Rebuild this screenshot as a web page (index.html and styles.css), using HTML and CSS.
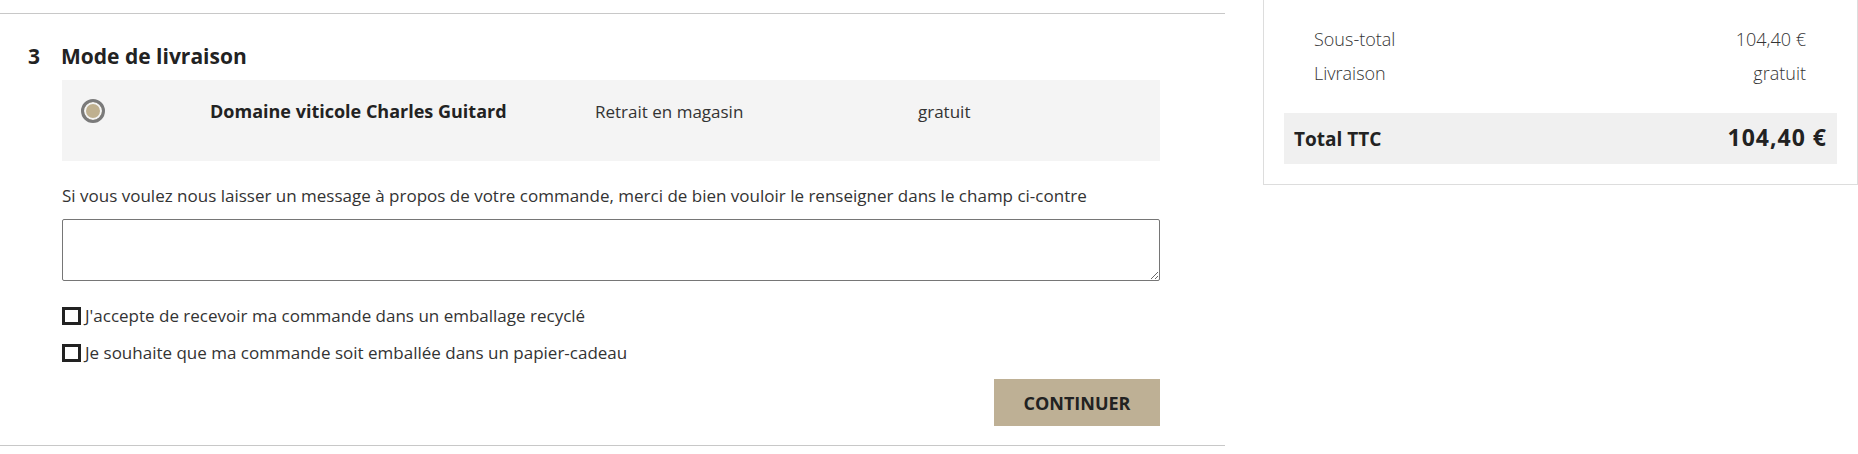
FILE: index.html
```html
<!DOCTYPE html>
<html lang="fr">
<head>
    <meta charset="UTF-8">
    <meta name="viewport" content="width=device-width, initial-scale=1.0">
    <title>Commande - Mode de livraison</title>
    <link rel="stylesheet" href="styles.css">
</head>
<body>
    <div class="page">
        <section class="step">
            <h2 class="step-title"><span class="step-num">3</span>Mode de livraison</h2>

            <div class="step-body">
                <div class="carrier">
                    <span class="radio"></span>
                    <span class="carrier-name">Domaine viticole Charles Guitard</span>
                    <span class="carrier-delay">Retrait en magasin</span>
                    <span class="carrier-price">gratuit</span>
                </div>

                <p class="note">Si vous voulez nous laisser un message à propos de votre commande, merci de bien vouloir le renseigner dans le champ ci-contre</p>
                <textarea class="message" rows="3"></textarea>

                <label class="check"><input type="checkbox"> J'accepte de recevoir ma commande dans un emballage recyclé</label>
                <label class="check"><input type="checkbox"> Je souhaite que ma commande soit emballée dans un papier-cadeau</label>

                <div class="actions">
                    <button class="btn">Continuer</button>
                </div>
            </div>
        </section>

        <aside class="summary">
            <div class="line"><span>Sous-total</span><span>104,40 €</span></div>
            <div class="line"><span>Livraison</span><span>gratuit</span></div>
            <div class="total"><span>Total TTC</span><span class="amount">104,40 €</span></div>
        </aside>
    </div>
</body>
</html>
```

FILE: styles.css
```css
body {
    font-family: "Open Sans", Lato, sans-serif;
    color: #333;
    background-color: #fff;
    margin: 0;
    padding: 0;
}
.page {
    display: flex;
    align-items: flex-start;
    gap: 38px;
}
.step {
    width: 1225px;
    margin-top: 13px;
    border-top: 1px solid #c8c8c8;
    border-bottom: 1px solid #c8c8c8;
    padding-bottom: 19px;
}
.step-title {
    margin: 30px 0 11px;
    padding-left: 28px;
    font-size: 21px;
    line-height: 25px;
    font-weight: bold;
    color: #222;
}
.step-num {
    display: inline-block;
    width: 33px;
}
.step-body {
    margin-left: 62px;
    width: 1098px;
}
.carrier {
    display: grid;
    grid-template-columns: 129px 385px 323px 1fr;
    align-items: center;
    background-color: #f4f4f4;
    padding: 19px 0 38px 19px;
    font-size: 17px;
    line-height: 21px;
}
.radio {
    width: 18px;
    height: 18px;
    border: 3px solid #7a7a7a;
    border-radius: 50%;
    background-color: #bfb08f;
    box-shadow: inset 0 0 0 2px #f4f4f4;
}
.carrier-name {
    font-size: 18px;
    font-weight: bold;
    color: #222;
}
.note {
    margin: 25px 0 13px;
    font-size: 17px;
    line-height: 20px;
}
.message {
    display: block;
    width: 100%;
    height: 62px;
    box-sizing: border-box;
    border: 1px solid #767676;
    border-radius: 2px;
    font-family: inherit;
    margin-bottom: 24px;
}
.check {
    display: flex;
    align-items: center;
    gap: 4px;
    font-size: 17px;
    line-height: 21px;
    margin-bottom: 16px;
}
.check input {
    appearance: none;
    width: 19px;
    height: 18px;
    margin: 0;
    border: 3px solid #222;
    background-color: #fff;
}
.actions {
    display: flex;
    justify-content: flex-end;
    margin-top: 1px;
}
.btn {
    width: 166px;
    height: 47px;
    border: none;
    background-color: #beb095;
    color: #222;
    font-family: inherit;
    font-size: 18px;
    font-weight: bold;
    text-transform: uppercase;
    cursor: pointer;
}
.btn:hover {
    background-color: #ab9c80;
}
.summary {
    width: 553px;
    border: 1px solid #ddd;
    border-top: none;
    padding: 22px 20px 20px;
}
.line {
    display: flex;
    justify-content: space-between;
    padding: 7px 31px 7px 30px;
    font-size: 18px;
    line-height: 20px;
    font-weight: 300;
}
.total {
    display: flex;
    justify-content: space-between;
    align-items: baseline;
    margin-top: 23px;
    padding: 10px 11px 10px 10px;
    background-color: #f0f0f0;
    font-weight: bold;
    color: #222;
    font-size: 19px;
    line-height: 29px;
}
.total .amount {
    font-size: 23px;
    letter-spacing: 1px;
    margin-right: -1px;
}
```
